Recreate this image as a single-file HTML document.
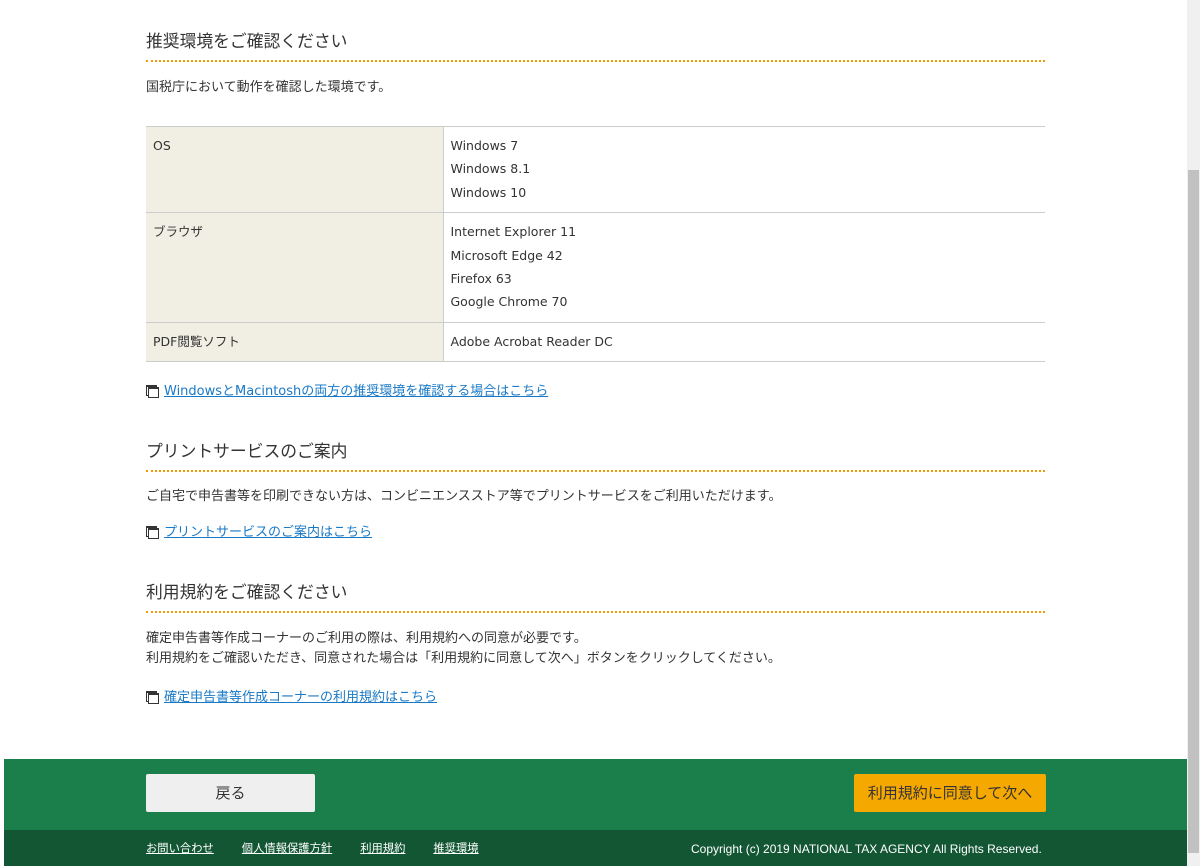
<!DOCTYPE html>
<html><head><meta charset="utf-8"><style>
*{margin:0;padding:0;box-sizing:border-box}
body{width:1200px;height:866px;overflow:hidden;background:#fff;font-family:"DejaVu Sans","Noto Sans CJK JP",sans-serif;color:#333;font-size:13px;position:relative}
h2{position:absolute;left:146px;width:899px;font-size:16.8px;font-weight:normal;color:#333;border-bottom:2px dotted #f39800;padding-bottom:7px;line-height:22px;font-family:"Liberation Sans","Noto Sans CJK JP",sans-serif}
p{position:absolute;left:146px;line-height:20px;font-size:13px;font-family:"Liberation Sans","Noto Sans CJK JP",sans-serif}
.lk{position:absolute;left:146px;font-size:13px;line-height:18px}
.lk a{color:#1a79c6;text-decoration:underline;margin-left:6px}
.ic{display:inline-block;width:12px;height:11px;position:relative;top:1px}
.ic:before{content:"";position:absolute;left:0;top:0;width:9px;height:8px;border:1px solid #333;border-top-width:2px}
.ic:after{content:"";position:absolute;left:2px;top:2px;width:9px;height:8px;border:1px solid #333;border-top-width:2px;background:#fff}
table{position:absolute;left:146px;top:126px;width:899px;border-collapse:collapse;font-size:12.5px}
td{border-top:1px solid #ccc;border-bottom:1px solid #ccc;vertical-align:top;padding:7px 7px 8px;line-height:23.4px}
td.h{background:#f1efe4;width:297px;border-right:1px solid #ccc}
.g{position:absolute;left:4px;top:759px;width:1183px;height:72px;background:#1a7f4b}
.d{position:absolute;left:4px;top:830px;width:1183px;height:36px;background:#135634}
.b1{position:absolute;left:146px;top:774px;width:169px;height:38px;background:#efefef;border-radius:2px;text-align:center;line-height:38px;font-size:15px;color:#333}
.b2{position:absolute;left:854px;top:774px;width:192px;height:38px;background:#f5a800;border-radius:2px;text-align:center;line-height:38px;font-size:15px;color:#333}
.f{position:absolute;top:840px;color:#fff;font-size:11.3px;line-height:18px;font-family:"Liberation Sans","Noto Sans CJK JP",sans-serif}
.f u{margin-right:28px}
.sb{position:absolute;left:1187px;top:0;width:13px;height:866px;background:#f0f0f0}
.th{position:absolute;left:1188px;top:170px;width:11px;height:683px;background:#c1c1c1}
</style></head><body>
<h2 style="top:31px">推奨環境をご確認ください</h2>
<p style="top:77px">国税庁において動作を確認した環境です。</p>
<table>
<tr><td class="h">OS</td><td>Windows 7<br>Windows 8.1<br>Windows 10</td></tr>
<tr><td class="h">ブラウザ</td><td>Internet Explorer 11<br>Microsoft Edge 42<br>Firefox 63<br>Google Chrome 70</td></tr>
<tr><td class="h">PDF閲覧ソフト</td><td>Adobe Acrobat Reader DC</td></tr>
</table>
<div class="lk" style="top:383px"><span class="ic"></span><a>WindowsとMacintoshの両方の推奨環境を確認する場合はこちら</a></div>
<h2 style="top:441px">プリントサービスのご案内</h2>
<p style="top:486px">ご自宅で申告書等を印刷できない方は、コンビニエンスストア等でプリントサービスをご利用いただけます。</p>
<div class="lk" style="top:524px"><span class="ic"></span><a>プリントサービスのご案内はこちら</a></div>
<h2 style="top:582px">利用規約をご確認ください</h2>
<p style="top:628px">確定申告書等作成コーナーのご利用の際は、利用規約への同意が必要です。<br>利用規約をご確認いただき、同意された場合は「利用規約に同意して次へ」ボタンをクリックしてください。</p>
<div class="lk" style="top:689px"><span class="ic"></span><a>確定申告書等作成コーナーの利用規約はこちら</a></div>
<div class="g"></div><div class="d"></div>
<div class="b1">戻る</div><div class="b2">利用規約に同意して次へ</div>
<div class="f" style="left:146px"><u>お問い合わせ</u><u>個人情報保護方針</u><u>利用規約</u><u>推奨環境</u></div>
<div class="f" style="left:691px;font-size:12px">Copyright (c) 2019 NATIONAL TAX AGENCY All Rights Reserved.</div>
<div class="sb"></div><div class="th"></div>
</body></html>
